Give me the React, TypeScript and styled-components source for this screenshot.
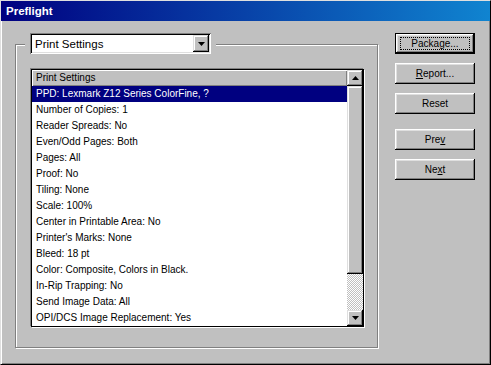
import React from 'react';
import styled, { createGlobalStyle } from 'styled-components';

const GlobalStyle = createGlobalStyle`
  html, body {
    margin: 0;
    padding: 0;
    background: #c0c0c0;
  }
  body {
    font-family: 'Liberation Sans', Arial, sans-serif;
  }
`;

const raised = `
  background: #c0c0c0;
  box-shadow: inset -1px -1px #000, inset 1px 1px #dfdfdf, inset -2px -2px #808080, inset 2px 2px #fff;
`;

const Window = styled.div`
  width: 491px;
  height: 365px;
  box-sizing: border-box;
  background: #c0c0c0;
  border: 1px solid;
  border-color: #dfdfdf #000 #000 #dfdfdf;
  box-shadow: inset 1px 1px #fff, inset -1px -1px #808080;
  display: flex;
  flex-direction: column;
`;

const TitleBar = styled.div`
  flex: none;
  height: 20px;
  padding-left: 5px;
  display: flex;
  align-items: center;
  background: linear-gradient(90deg, #000080 0%, #1084d0 100%);
  color: #fff;
  font-weight: bold;
  font-size: 11.5px;
`;

const Body = styled.div`
  display: flex;
  align-items: flex-start;
  padding: 12px 0 0 14px;
`;

const GroupBox = styled.div`
  width: 363px;
  height: 304px;
  box-sizing: border-box;
  margin-top: 11px;
  border: 1px solid #808080;
  box-shadow: inset 1px 1px #fff, 1px 1px #fff;
  display: flex;
  flex-direction: column;
  align-items: flex-start;
`;

const Legend = styled.div`
  margin: -12px 0 0 9px;
  padding: 0 5px;
  background: #c0c0c0;
`;

const Select = styled.div`
  width: 181px;
  height: 21px;
  box-sizing: border-box;
  padding: 2px;
  display: flex;
  align-items: center;
  background: #fff;
  box-shadow: inset 1px 1px #808080, inset -1px -1px #fff, inset 2px 2px #000, inset -2px -2px #dfdfdf;
  font-size: 11.5px;
  color: #000;
`;

const SelectText = styled.span`
  padding-left: 3px;
  flex: 1;
`;

const ArrowButton = styled.div<{ $h: number }>`
  ${raised}
  width: 16px;
  height: ${p => p.$h}px;
  flex: none;
  display: flex;
  align-items: center;
  justify-content: center;
`;

const ListBox = styled.div`
  width: 333px;
  height: 258px;
  box-sizing: border-box;
  margin: 15px 0 0 15px;
  border: 1px solid #000;
  box-shadow: -1px -1px #808080, 1px 1px #fff;
  display: flex;
  background: #fff;
`;

const ListMain = styled.div`
  flex: 1;
  display: flex;
  flex-direction: column;
`;

const ListHeader = styled.div`
  height: 16px;
  box-sizing: border-box;
  padding-left: 4px;
  background: #c0c0c0;
  box-shadow: inset 1px 1px #fff, inset -1px -1px #808080;
  font-size: 10px;
  line-height: 16px;
  color: #000;
`;

const Row = styled.div<{ $selected?: boolean }>`
  height: 16px;
  padding-left: 4px;
  font-size: 10px;
  line-height: 16px;
  white-space: nowrap;
  background: ${p => (p.$selected ? '#000080' : '#fff')};
  color: ${p => (p.$selected ? '#fff' : '#000')};
`;

const ScrollBar = styled.div`
  width: 16px;
  flex: none;
  display: flex;
  flex-direction: column;
`;

const Thumb = styled.div`
  ${raised}
  height: 188px;
`;

const Track = styled.div`
  flex: 1;
  background: repeating-conic-gradient(#fff 0 25%, #c0c0c0 0 50%) 0 0 / 2px 2px;
`;

const Buttons = styled.div`
  margin-left: 17px;
  display: flex;
  flex-direction: column;
`;

const Button = styled.button<{ $default?: boolean; $gap?: number }>`
  position: relative;
  width: 80px;
  height: 21px;
  box-sizing: border-box;
  margin: ${p => p.$gap ?? 0}px 0 0;
  padding: 0;
  background: #c0c0c0;
  border: ${p => (p.$default ? '1px solid #000' : 'none')};
  box-shadow: inset -1px -1px #000, inset 1px 1px #fff, inset -2px -2px #808080, inset 2px 2px #dfdfdf;
  font: 10px 'Liberation Sans', Arial, sans-serif;
  color: #000;

  &::after {
    content: '';
    display: ${p => (p.$default ? 'block' : 'none')};
    position: absolute;
    inset: 3px 4px 3px 4px;
    border: 1px dotted #000;
  }

  u {
    text-decoration: underline;
  }
`;

const Triangle = ({ up }: { up?: boolean }) => (
  <svg width="7" height="4" viewBox="0 0 7 4">
    <polygon points={up ? '3.5,0 7,4 0,4' : '0,0 7,0 3.5,4'} fill="#000" />
  </svg>
);

const settings = [
  'PPD: Lexmark Z12 Series ColorFine, ?',
  'Number of Copies: 1',
  'Reader Spreads: No',
  'Even/Odd Pages: Both',
  'Pages: All',
  'Proof: No',
  'Tiling: None',
  'Scale: 100%',
  'Center in Printable Area: No',
  "Printer's Marks: None",
  'Bleed: 18 pt',
  'Color: Composite, Colors in Black.',
  'In-Rip Trapping: No',
  'Send Image Data: All',
  'OPI/DCS Image Replacement: Yes',
];

export default function App() {
  return (
    <>
      <GlobalStyle />
      <Window>
        <TitleBar>Preflight</TitleBar>
        <Body>
          <GroupBox>
            <Legend>
              <Select>
                <SelectText>Print Settings</SelectText>
                <ArrowButton $h={17}>
                  <Triangle />
                </ArrowButton>
              </Select>
            </Legend>
            <ListBox>
              <ListMain>
                <ListHeader>Print Settings</ListHeader>
                {settings.map((s, i) => (
                  <Row key={s} $selected={i === 0}>
                    {s}
                  </Row>
                ))}
              </ListMain>
              <ScrollBar>
                <ArrowButton $h={16}>
                  <Triangle up />
                </ArrowButton>
                <Thumb />
                <Track />
                <ArrowButton $h={16}>
                  <Triangle />
                </ArrowButton>
              </ScrollBar>
            </ListBox>
          </GroupBox>
          <Buttons>
            <Button $default>Package...</Button>
            <Button $gap={9}>
              <u>R</u>eport...
            </Button>
            <Button $gap={9}>Reset</Button>
            <Button $gap={15}>
              Pre<u>v</u>
            </Button>
            <Button $gap={9}>
              Ne<u>x</u>t
            </Button>
          </Buttons>
        </Body>
      </Window>
    </>
  );
}
